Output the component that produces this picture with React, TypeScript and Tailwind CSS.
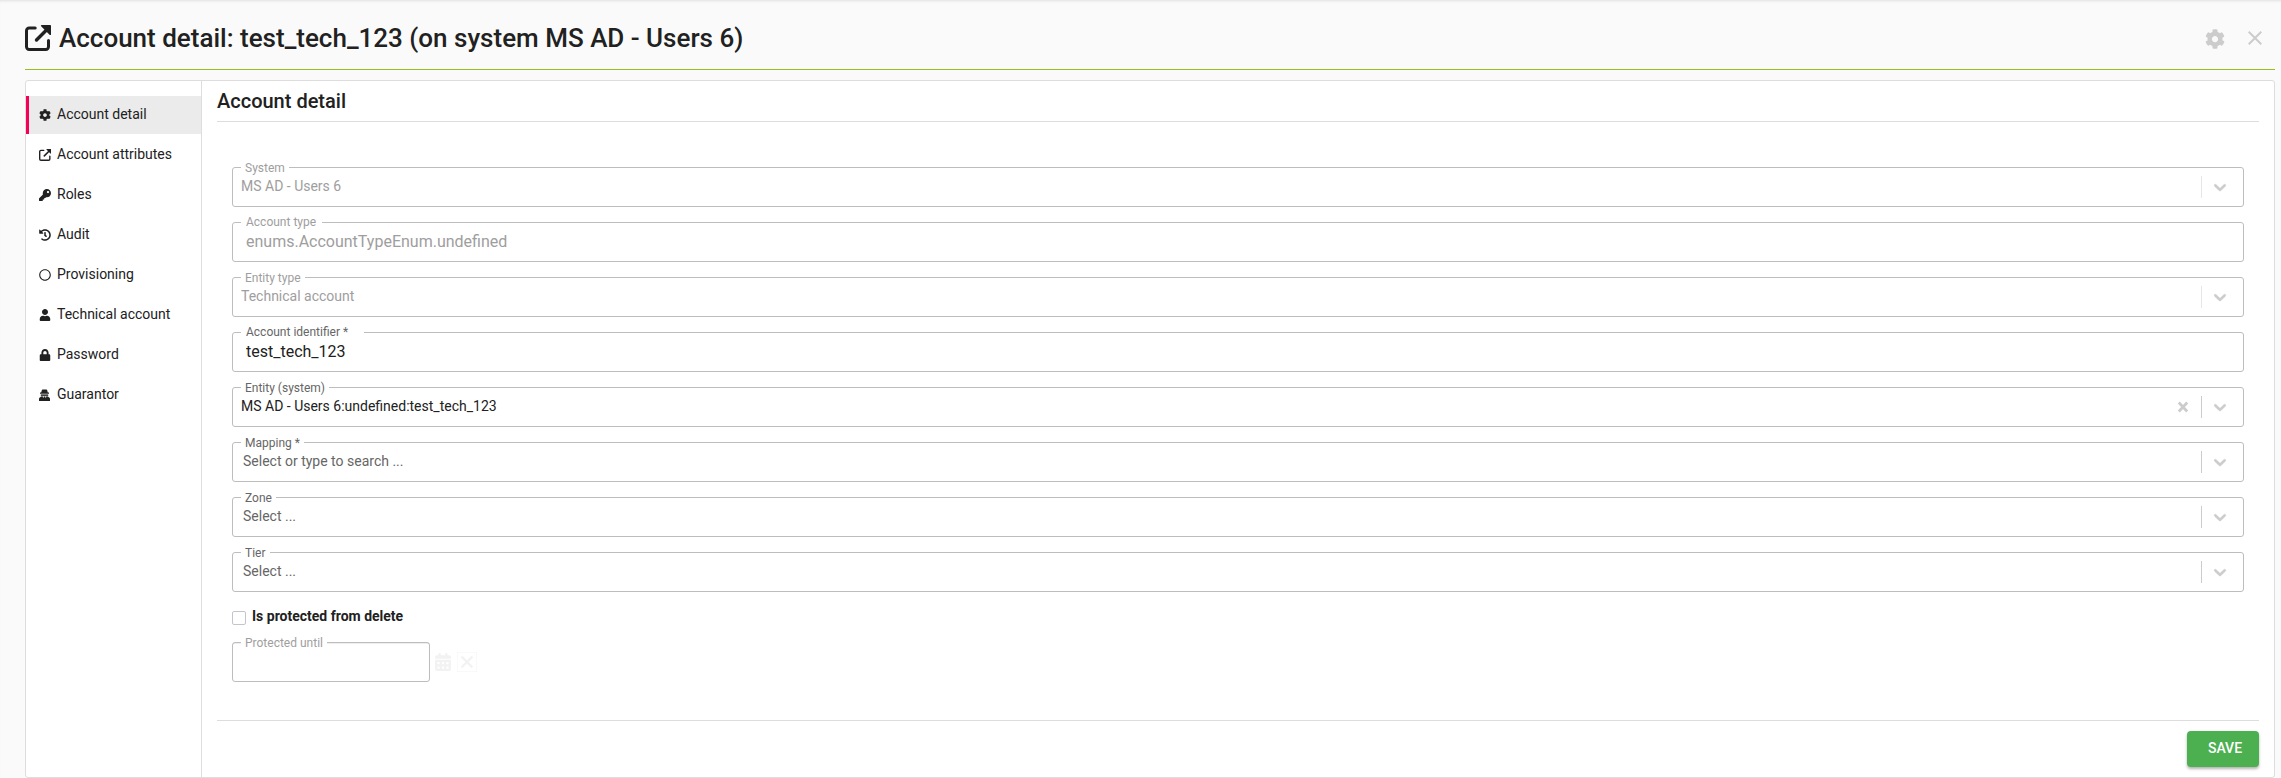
import { useState } from 'react';
import type { ComponentType, ReactNode } from 'react';
import { FaCalendarAlt, FaCog, FaHistory, FaKey, FaLock, FaRegCircle, FaUser } from 'react-icons/fa';
import { MdClose } from 'react-icons/md';

function ExternalLinkIcon({ className }: { className?: string }) {
  return (
    <svg className={className} viewBox="0 0 26 26" fill="none" stroke="currentColor">
      <path
        d="M10.2 3H4.200a2.700 2.700 0 0 0-2.700 2.700V21.800a2.700 2.700 0 0 0 2.700 2.700h16.600a2.700 2.700 0 0 0 2.700-2.700v-6.300"
        strokeWidth="3"
        strokeLinecap="round"
      />
      <path d="M11.500 15L21.500 5" strokeWidth="3.4" strokeLinecap="round" />
      <path d="M16.600 0h8.600a.8.8 0 0 1 .8.8V9.400a.7.7 0 0 1-1.200.5l-8.700-8.700A.7.7 0 0 1 16.600 0z" fill="currentColor" stroke="none" />
    </svg>
  );
}

function GuarantorIcon({ className }: { className?: string }) {
  return (
    <svg className={className} viewBox="0 0 12 12" fill="currentColor">
      <path d="M3.6 0.5h3.8q.6 0 .8.8l.6 2.3h1.2v1.1H1V3.6h1.2l.6-2.3q.2-.8.8-.8z" />
      <path d="M1.8 5.3h7.400v1.900H1.800z" fillOpacity="0.85" />
      <path d="M2.2 7.4h1.700v1.200h1V7.400h1.200v1.200h1V7.400h1.700l1.700 1.400q.5.400.5 1.200v2H0v-2q0-.8.5-1.200z" />
    </svg>
  );
}

const tabs: { label: string; icon: ComponentType<{ className?: string }> }[] = [
  { label: 'Account detail', icon: FaCog },
  { label: 'Account attributes', icon: ExternalLinkIcon },
  { label: 'Roles', icon: FaKey },
  { label: 'Audit', icon: FaHistory },
  { label: 'Provisioning', icon: FaRegCircle },
  { label: 'Technical account', icon: FaUser },
  { label: 'Password', icon: FaLock },
  { label: 'Guarantor', icon: GuarantorIcon },
];

function Outline({ id, label, disabled, labelClass = '-top-2 px-1', children }: {
  id: string;
  label: string;
  disabled?: boolean;
  labelClass?: string;
  children: ReactNode;
}) {
  return (
    <div className="relative flex h-10 items-center rounded-[3px] border border-[#bdbdbd]">
      <label
        htmlFor={id}
        className={`absolute left-2 bg-white text-xs leading-4 ${labelClass} ${disabled ? 'text-[#9e9e9e]' : 'text-[#666]'}`}
      >
        {label}
      </label>
      {children}
    </div>
  );
}

function TextField({ id, label, value, required, disabled }: {
  id: string;
  label: string;
  value: string;
  required?: boolean;
  disabled?: boolean;
}) {
  return (
    <Outline
      id={id}
      label={required ? `${label} *` : label}
      disabled={disabled}
      labelClass={required ? '-top-[9px] pl-[5px] pr-4' : '-top-[9px] pl-[5px] pr-1.5'}
    >
      <input
        id={id}
        type="text"
        defaultValue={value}
        disabled={disabled}
        className="h-full w-full bg-transparent px-[13px] pb-0.5 text-base text-[#212121] outline-none disabled:text-[#9e9e9e]"
      />
    </Outline>
  );
}

function SelectField({ id, label, value, placeholder, disabled, clearable }: {
  id: string;
  label: string;
  value?: string;
  placeholder?: string;
  disabled?: boolean;
  clearable?: boolean;
}) {
  return (
    <Outline id={id} label={label} disabled={disabled}>
      <select
        id={id}
        disabled={disabled}
        className={`h-full min-w-0 grow appearance-none bg-transparent pb-0.5 text-sm outline-none disabled:text-[#9e9e9e] disabled:opacity-100 ${value ? 'pl-2 text-[#212121]' : 'pl-2.5 text-[#666]'}`}
      >
        <option>{value ?? placeholder}</option>
      </select>
      {clearable && (
        <button type="button" aria-label="Clear" className="px-3 text-[#ccc]">
          <svg className="h-3 w-3" viewBox="0 0 12 12" fill="none" stroke="currentColor" strokeWidth="2.7">
            <path d="M1.800 1.500l8.400 9M10.200 1.500l-8.400 9" />
          </svg>
        </button>
      )}
      <span className={`h-[22px] w-px ${disabled ? 'bg-[#e6e6e6]' : 'bg-[#ccc]'}`} />
      <span className="flex w-[41px] justify-center pr-1.5 text-[#ccc]">
        <svg className="h-5 w-5" viewBox="0 0 20 20" fill="currentColor" stroke="currentColor" strokeWidth="0.4">
          <path d="M4.516 7.548c0.436-0.446 1.043-0.481 1.576 0l3.908 3.747 3.908-3.747c0.533-0.481 1.141-0.446 1.574 0 0.436 0.445 0.408 1.197 0 1.615-0.406 0.418-4.695 4.502-4.695 4.502-0.217 0.223-0.502 0.335-0.787 0.335s-0.57-0.112-0.789-0.335c0 0-4.287-4.084-4.695-4.502s-0.436-1.17 0-1.615z" />
        </svg>
      </span>
    </Outline>
  );
}

export default function App() {
  const [active, setActive] = useState('Account detail');

  return (
    <div className="min-h-screen bg-[#fafafa] pl-[25px] pr-1.5 font-[Roboto,sans-serif] text-[#212121] shadow-[inset_0_3px_3px_-2px_#e0e0e0]">
      <header className="flex h-[70px] items-center justify-between border-b border-[#95c11f]">
        <h1 className="flex items-center gap-2 pt-1.5 text-[26px] leading-8 font-medium">
          <ExternalLinkIcon className="h-[26px] w-[26px]" />
          Account detail: test_tech_123 (on system MS AD - Users 6)
        </h1>
        <div className="flex items-center gap-[18px] pt-2 pr-2 text-[#ccc]">
          <button type="button" aria-label="Settings">
            <FaCog className="h-5 w-5" />
          </button>
          <button type="button" aria-label="Close" className="pb-0.5">
            <MdClose className="h-6 w-6" />
          </button>
        </div>
      </header>

      <div className="mt-2.5 flex rounded-[3px] border border-[#ddd] bg-white">
        <nav className="flex w-[176px] shrink-0 flex-col gap-0.5 border-r border-[#ddd] pt-[15px]">
          {tabs.map(({ label, icon: Icon }) => (
            <a
              key={label}
              href="#"
              onClick={(e) => {
                e.preventDefault();
                setActive(label);
              }}
              className={`flex h-[38px] items-center gap-1.5 border-l-3 pl-2.5 text-sm ${active === label ? 'border-[#f50057] bg-[#ebebeb]' : 'border-transparent'}`}
            >
              <Icon className="h-3 w-3 shrink-0" />
              <span className="pb-0.5">{label}</span>
            </a>
          ))}
        </nav>

        <main className="min-w-0 grow px-[15px]">
          <h2 className="flex h-[41px] items-center border-b border-[#ddd] text-xl font-medium">Account detail</h2>

          <form className="flex flex-col px-[15px] pt-[45px]" onSubmit={(e) => e.preventDefault()}>
            <div className="flex flex-col gap-[15px]">
              <SelectField id="system" label="System" value="MS AD - Users 6" disabled />
              <TextField id="accountType" label="Account type" value="enums.AccountTypeEnum.undefined" disabled />
              <SelectField id="entityType" label="Entity type" value="Technical account" disabled />
              <TextField id="uid" label="Account identifier" value="test_tech_123" required />
              <SelectField id="systemEntity" label="Entity (system)" value="MS AD - Users 6:undefined:test_tech_123" clearable />
              <SelectField id="mapping" label="Mapping *" placeholder="Select or type to search ..." />
              <SelectField id="zone" label="Zone" placeholder="Select ..." />
              <SelectField id="tier" label="Tier" placeholder="Select ..." />
            </div>

            <div className="flex h-[50px] items-center gap-1.5 pb-0.5">
              <input
                id="inProtection"
                type="checkbox"
                className="mt-1 h-3.5 w-3.5 appearance-none rounded-xs border border-[#c4c4cc] checked:bg-[#4caf50]"
              />
              <label htmlFor="inProtection" className="text-sm font-bold">Is protected from delete</label>
            </div>

            <div className="flex items-center text-[#f2f2f2]">
              <div className="w-[198px]">
                <Outline id="endOfProtection" label="Protected until" disabled>
                  <input
                    id="endOfProtection"
                    type="text"
                    disabled
                    className="h-full w-full bg-transparent px-3 text-sm shadow-[inset_0_1px_1px_rgba(0,0,0,0.075)]"
                  />
                </Outline>
              </div>
              <button type="button" disabled aria-label="Open calendar" className="ml-[5px]">
                <FaCalendarAlt className="h-[18px] w-4" />
              </button>
              <button type="button" disabled aria-label="Clear date" className="ml-1.5">
                <MdClose className="h-5 w-5" stroke="currentColor" strokeWidth="1" />
              </button>
            </div>
          </form>

          <div className="mt-[38px] flex justify-end border-t border-[#ddd] py-2.5">
            <button
              type="button"
              className="h-9 w-18 rounded bg-[#4caf50] pb-0.5 pl-1 text-sm font-medium text-white uppercase shadow-[0_2px_3px_rgba(0,0,0,0.3)]"
            >
              Save
            </button>
          </div>
        </main>
      </div>
    </div>
  );
}
